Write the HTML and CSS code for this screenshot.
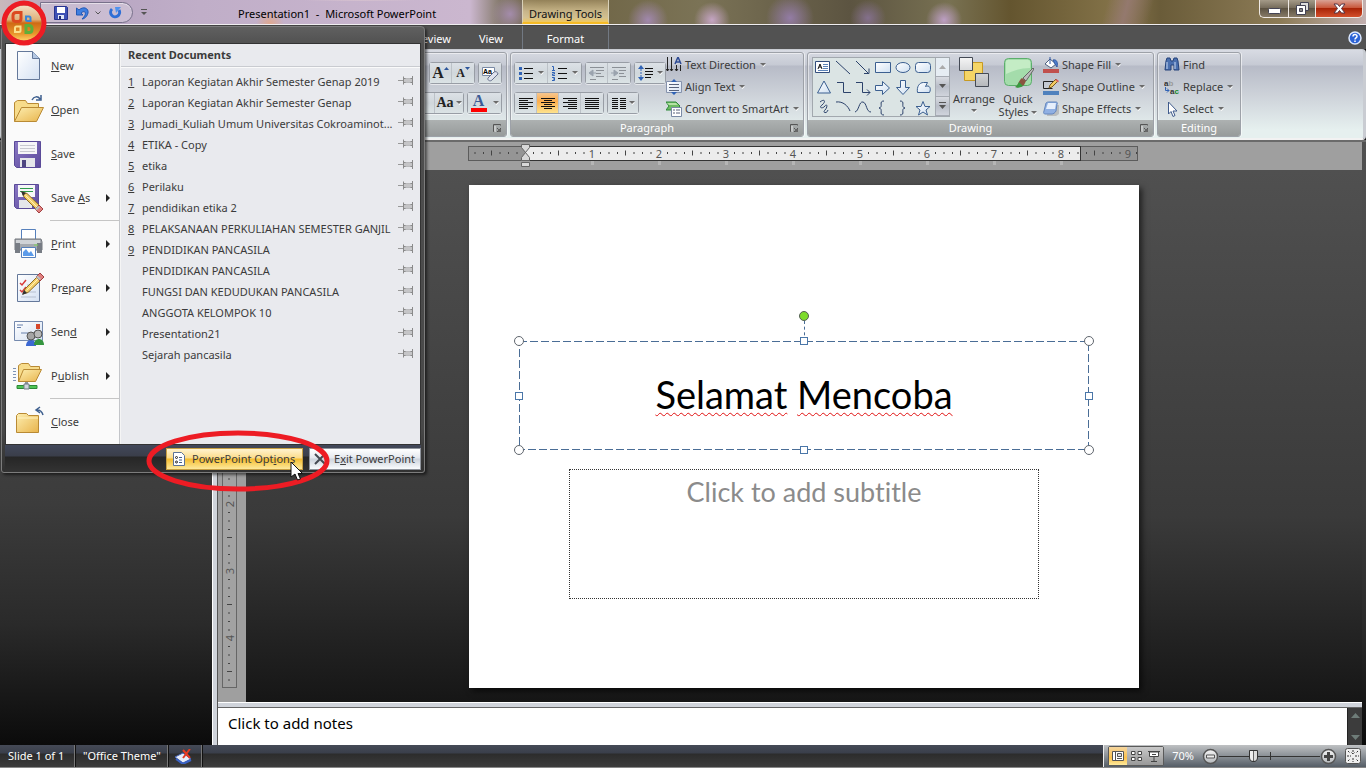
FILE: index.html
```html
<!DOCTYPE html>
<html lang="en">
<head>
<meta charset="utf-8">
<title>Presentation1 - Microsoft PowerPoint</title>
<link rel="stylesheet" href="styles.css">
</head>
<body>
<svg class="defs" aria-hidden="true">
  <defs>
    <linearGradient id="paper" x1="0" y1="0" x2="1" y2="1"><stop offset="0" stop-color="#fff"/><stop offset="1" stop-color="#d5e1f3"/></linearGradient>
    <linearGradient id="folder" x1="0" y1="0" x2="1" y2="1"><stop offset="0" stop-color="#fdeeb0"/><stop offset="1" stop-color="#e8b44c"/></linearGradient>
    <linearGradient id="disk" x1="0" y1="0" x2="1" y2="1"><stop offset="0" stop-color="#8a78c4"/><stop offset="1" stop-color="#5c4a9c"/></linearGradient>
    <linearGradient id="silver" x1="0" y1="0" x2="0" y2="1"><stop offset="0" stop-color="#f5f5f5"/><stop offset="1" stop-color="#b5b8bc"/></linearGradient>
    <linearGradient id="ice" x1="0" y1="0" x2="1" y2="1"><stop offset="0" stop-color="#fff"/><stop offset="1" stop-color="#cfe0f2"/></linearGradient>
    <linearGradient id="orb" x1="0" y1="0" x2="0" y2="1"><stop offset="0" stop-color="#f3e0c6"/><stop offset=".4" stop-color="#e0b27c"/><stop offset=".5" stop-color="#cf6a14"/><stop offset=".8" stop-color="#e8962c"/><stop offset="1" stop-color="#ffd468"/></linearGradient>
    <symbol id="arrow" viewBox="0 0 6 4"><path d="M1 1.500h5L3.500 4z" fill="#fff"/><path d="M0 0h6L3 3z" fill="#6b6b6b"/></symbol>
    <symbol id="launch" viewBox="0 0 8 8"><path d="M1.500 7.500h-1v-7h7v1" fill="none" stroke="#555"/><path d="M2 8V2" stroke="#eee" fill="none"/><path d="M4 4l3 3M7.500 4v3.500H4" fill="none" stroke="#555"/><path d="M5 5h3v3H5z" fill="#666"/></symbol>
    <symbol id="pin" viewBox="0 0 15 9"><path d="M0 4.500h5" stroke="#999" fill="none"/><path d="M5.500 .5v8M6 2.500h1l1 .5h4l1-.5h1.500v-2M6 6.500h1l1-.5h4l1 .5h1.500v2M14.500 0v9" fill="none" stroke="#8a8a8a"/><path d="M6 3h8v3H6z" fill="#c5c5c7"/></symbol>
    <symbol id="pencil" viewBox="0 0 22 22"><path d="M1 1l5 1.500L20 16l-3.500 3.500L3 6z" fill="#f3cf6b" stroke="#8b6a24"/><path d="M4.500 4.500L18 18" stroke="#fff2b8" fill="none"/><path d="M0 0l5 2-3 3z" fill="#333"/><path d="M18 14l4 4-4 4-4-4z" fill="#e08080" stroke="#a04040"/><path d="M17 15l-3 3 1.500 1.500L19 16z" fill="#b8c4c0"/></symbol>
  </defs>
</svg>

<div class="window">
  <header class="titlebar">
    <div class="titlebar-left">
      <div class="quick-access">
        <button class="plain" aria-label="Save"><svg width="14" height="14" viewBox="0 0 14 14"><path d="M.5.5h12l1 1v12H.5z" fill="#3f51b5" stroke="#27338f"/><path d="M3 1h8v6H3z" fill="#fff"/><path d="M4 9h6v4H4z" fill="#dfe6f8"/><path d="M5 10h2v3H5z" fill="#222c70"/></svg></button>
        <button class="plain" aria-label="Undo"><svg width="13" height="14" viewBox="0 0 13 14"><path d="M3 4c4-4 10-2 9 3-1 4-4 6-6 6 3-3 4-5 3-7-1-1-3 0-4 1l2 2H.5V2z" fill="#3f7fe0" stroke="#2358b5"/></svg></button>
        <svg width="6" height="4" class="mini"><path d="M.5.5l2.500 2.500L5.500.5" fill="none" stroke="#555"/></svg>
        <button class="plain redo" aria-label="Repeat"><svg width="13" height="14" viewBox="0 0 13 14"><path d="M3 3a4.500 4.500 0 1 0 7 1" fill="none" stroke="#2f6fd6" stroke-width="3"/><path d="M6 1h6L7 7z" fill="#4f93ee"/></svg></button>
      </div>
      <button class="plain customize" aria-label="Customize Quick Access Toolbar"><svg width="6" height="7"><path d="M0 .5h6" stroke="#555"/><path d="M0 3h6L3 6z" fill="#555"/></svg></button>
      <h1 class="caption">Presentation1 &nbsp;-&nbsp; Microsoft PowerPoint</h1>
    </div>
    <div class="context-title">Drawing Tools</div>
    <div class="window-controls">
      <button class="win-min" aria-label="Minimize"><svg width="13" height="6"><rect x=".5" y=".5" width="12" height="5" rx="1" fill="#fff" stroke="#445"/></svg></button>
      <button class="win-max" aria-label="Restore"><svg width="13" height="13"><path d="M4.500.5h8v8h-8z" fill="#ddd" stroke="#445"/><path d="M.5 3.500h9v9h-9z" fill="#fff" stroke="#445"/><path d="M3.500 6.500h3v3h-3z" fill="#888" stroke="#445"/></svg></button>
      <button class="win-close" aria-label="Close"><svg width="13" height="11" viewBox="0 0 13 11"><path d="M1 1h3.500l2 2.500 2-2.500H12L8.500 5.500 12 10H8.500l-2-2.500-2 2.500H1l3.500-4.500z" fill="#fff" stroke="#534"/></svg></button>
    </div>
  </header>

  <nav class="tabs">
    <div class="tabs-main"><button class="plain tab">Review</button><button class="plain tab">View</button></div>
    <button class="plain tab format-tab">Format</button>
    <button class="plain help" aria-label="Help"><svg width="14" height="14" viewBox="0 0 14 14"><circle cx="7" cy="7" r="6" fill="#2c63d6" stroke="#dbe8ff" stroke-width="1.500"/><path d="M5 5.500C5 3 9 3 9 5.300 9 7 7 6.800 7 8.500M7 9.500V11" fill="none" stroke="#fff" stroke-width="1.500"/></svg></button>
  </nav>

  <section class="ribbon">
    <div class="group font-group">
      <div class="group-body font-body">
        <div class="button-row">
          <div class="set"><button class="tool letter"><b class="big-a">A</b><svg width="5" height="3" class="up"><path d="M0 3h5L2.500 0z" fill="#2d569b"/></svg></button><button class="tool letter"><b class="small-a">A</b><svg width="5" height="3" class="up"><path d="M0 0h5L2.500 3z" fill="#2d569b"/></svg></button></div>
          <div class="set"><button class="tool" aria-label="Clear Formatting"><svg width="17" height="17"><path d="M.5 2.500h12v8H.5z" fill="#fff" stroke="#7a8aa5"/><text x="1" y="9" class="tiny">Aa</text><path d="M6 13l6-6c1-1 4 0 4 2l-6 6c-2 2-5 0-4-2z" fill="#dfe3ee" stroke="#66708c"/></svg></button></div>
        </div>
        <div class="button-row">
          <div class="set"><button class="tool dropdown letter" aria-label="Character spacing"><svg class="arr"><use href="#arrow"/></svg></button><button class="tool dropdown letter"><b class="aa">Aa</b><svg class="arr"><use href="#arrow"/></svg></button></div>
          <div class="set"><button class="tool font-color"><span>A</span><svg class="arr"><use href="#arrow"/></svg></button></div>
        </div>
      </div>
      <div class="group-label"><button class="plain launcher" aria-label="Font dialog"><svg width="8" height="8"><use href="#launch"/></svg></button></div>
    </div>

    <div class="group paragraph-group">
      <div class="group-body split">
        <div class="para-buttons">
          <div class="button-row">
            <div class="set">
              <button class="tool dropdown" aria-label="Bullets"><svg width="14" height="14"><path d="M5 2.500h9M5 7.500h9M5 12.500h9" stroke="#111"/><path d="M0 1h3v3H0zM0 6h3v3H0zM0 11h3v3H0z" fill="#2f62b5"/></svg><svg class="arr"><use href="#arrow"/></svg></button>
              <button class="tool dropdown" aria-label="Numbering"><svg width="15" height="15"><path d="M6 2.500h9M6 7.500h9M6 12.500h9" stroke="#111"/><path d="M0 .5h1.500V4M0 4.500h3M0 6.500h2.500v1.500H.5v1.500H3M0 11.500h2.500v3H0M1 13h1" stroke="#2f62b5" fill="none"/></svg><svg class="arr"><use href="#arrow"/></svg></button>
            </div>
            <div class="set disabled">
              <button class="tool" aria-label="Decrease indent"><svg width="16" height="14"><path d="M1 1.500h14M7 4.500h8M7 7.500h5M7 10.500h8M1 13.500h6" stroke="#8b9096"/><path d="M4 4L0 7l4 3zM4 7h3" fill="#9aa3ae" stroke="#9aa3ae"/></svg></button>
              <button class="tool" aria-label="Increase indent"><svg width="16" height="14"><path d="M1 1.500h14M8 4.500h7M8 7.500h5M8 10.500h7M1 13.500h6" stroke="#8b9096"/><path d="M3 4l4 3-4 3zM0 7h4" fill="#9aa3ae" stroke="#9aa3ae"/></svg></button>
            </div>
            <div class="set"><button class="tool dropdown spacing" aria-label="Line spacing"><svg width="16" height="16"><path d="M7 3.500h8M7 6.500h8M7 9.500h8M7 12.500h6" stroke="#111"/><path d="M3 0l3 4H0zM3 16l3-4H0z" fill="#2f62b5"/><path d="M3 4v8" stroke="#2f62b5" stroke-dasharray="2 1"/></svg><svg class="arr"><use href="#arrow"/></svg></button></div>
          </div>
          <div class="button-row">
            <div class="set">
              <button class="tool" aria-label="Align left"><svg width="14" height="11"><path d="M0 .5h14M0 2.500h9M0 4.500h14M0 6.500h9M0 8.500h14M0 10.500h9" stroke="#111"/></svg></button>
              <button class="tool pressed" aria-label="Center"><svg width="14" height="11"><path d="M0 .5h14M3 2.500h8M0 4.500h14M3 6.500h8M0 8.500h14M3 10.500h8" stroke="#111"/></svg></button>
              <button class="tool" aria-label="Align right"><svg width="14" height="11"><path d="M0 .5h14M5 2.500h9M0 4.500h14M5 6.500h9M0 8.500h14M5 10.500h9" stroke="#111"/></svg></button>
              <button class="tool" aria-label="Justify"><svg width="14" height="11"><path d="M0 .5h14M0 2.500h14M0 4.500h14M0 6.500h14M0 8.500h14M0 10.500h14" stroke="#111"/></svg></button>
            </div>
            <div class="set"><button class="tool dropdown columns" aria-label="Columns"><svg width="14" height="11"><path d="M0 .5h14M0 2.500h14M0 4.500h14M0 6.500h14M0 8.500h14M0 10.500h14" stroke="#111"/><path d="M6 0h2v11H6z" fill="#d5dce0"/></svg><svg class="arr"><use href="#arrow"/></svg></button></div>
          </div>
        </div>
        <div class="command-list">
          <button class="plain command"><svg width="16" height="16"><path d="M1.500 0v14M5.500 0v14M10.500 8v6M14.500 8v6M0 12l1.500 2L3 12M4 12l1.500 2L7 12M9 12l1.500 2 1.500-2" stroke="#222" fill="none"/><path d="M9 7l3-7 3 7M10 5h4" stroke="#2d4a94" stroke-width="1.500" fill="none"/></svg>Text Direction<svg class="arr"><use href="#arrow"/></svg></button>
          <button class="plain command"><svg width="16" height="16"><path d="M.5 2.500h15v11H.5z" fill="url(#paper)" stroke="#8592ac"/><path d="M3 5.500h10M3 8.500h10M3 11.500h10" stroke="#56617b"/><path d="M8 0l3 3H5zM8 16l3-3H5z" fill="#2f62b5"/></svg>Align Text<svg class="arr"><use href="#arrow"/></svg></button>
          <button class="plain command"><svg width="16" height="16"><path d="M0 1h10l4 4-4 4H0l3-4z" fill="#6dbb62" stroke="#2f8a3b"/><path d="M1 2h9l2 2H3z" fill="#b5e2a4"/><path d="M5.500 6.500h10v9h-10z" fill="#fff" stroke="#7a8aa5"/><path d="M7 9h2M7 12h2M10 9h4M10 12h4" stroke="#56617b"/></svg>Convert to SmartArt<svg class="arr"><use href="#arrow"/></svg></button>
        </div>
      </div>
      <div class="group-label">Paragraph<button class="plain launcher" aria-label="Paragraph dialog"><svg width="8" height="8"><use href="#launch"/></svg></button></div>
    </div>

    <div class="group drawing-group">
      <div class="group-body split">
        <div class="gallery">
          <svg width="122" height="58" viewBox="0 0 122 58" role="img" aria-label="Shapes">
            <g fill="none" stroke="#2c426b">
              <path d="M2.500 3.500h14v11h-14z" fill="#fff" stroke="#334d7c"/><path d="M5 11l2-5 2 5M6 9h2" stroke="#111"/><path d="M10 6.500h5M10 8.500h5M10 10.500h5M5 12.500h10" stroke="#5c83b8"/>
              <path d="M23 3l14 13M43 3l12 12M51 15.500h5v-5"/>
              <path d="M62.500 4.500h15v10h-15z" fill="url(#ice)" stroke="#3b5f90"/>
              <ellipse cx="90" cy="9.500" rx="7" ry="5" fill="url(#ice)" stroke="#3b5f90"/>
              <rect x="102.500" y="4.500" width="15" height="10" rx="3" fill="url(#ice)" stroke="#3b5f90"/>
              <path d="M11 23l6.500 12h-13z" fill="url(#ice)" stroke="#3b5f90"/>
              <path d="M24 24.500h6.500v10H38M43 24.500h6.500v10H57M54 31.500l3 3-3 3"/>
              <path d="M62.500 27.500h7v-4l7 6.500-7 6.500v-4h-7z" fill="url(#ice)" stroke="#3b5f90"/>
              <path d="M87.500 22.500h5v7h4L90 36.500l-6.500-7h4z" fill="url(#ice)" stroke="#3b5f90"/>
              <path d="M104.500 34.500c-1-6 2-10 6-10h4l-2 4c4-2 6 2 4 6z" fill="url(#ice)" stroke="#3b5f90"/>
              <path d="M7 44c5-4 6 0 2 3s1 4 3 1 3 1 0 4 2 4 3 0M23 44c7-1 12 4 14 9M42 54c4-1 4-11 8-10s3 10 8 10"/>
              <path d="M71 43c-6 0 0 6-5 7 5 1-1 7 5 7M87 43c6 0 0 6 5 7-5 1 1 7-5 7"/>
              <path d="M110 43.500l2 5h5l-4 3.500 1.500 5-4.500-3-4.500 3 1.500-5-4-3.500h5z" fill="url(#ice)" stroke="#3b5f90"/>
            </g>
          </svg>
          <div class="gallery-scroll">
            <button aria-label="Previous shapes"><svg width="7" height="4"><path d="M0 4h7L3.500 0z" fill="#aaa"/></svg></button>
            <button aria-label="Next shapes"><svg width="7" height="4"><path d="M0 0h7L3.500 4z" fill="#555"/></svg></button>
            <button aria-label="More shapes"><svg width="7" height="7"><path d="M0 .5h7" stroke="#555"/><path d="M0 3h7L3.500 7z" fill="#555"/></svg></button>
          </div>
        </div>
        <button class="plain big-command arrange"><svg width="32" height="32"><path d="M6.500 6.500h18v18h-18z" fill="#f5d566" stroke="#c79a22"/><path d="M1.500 1.500h13v13h-13zM17.500 17.500h13v13h-13z" fill="url(#silver)" stroke="#444a55"/></svg><span>Arrange</span><svg class="arr"><use href="#arrow"/></svg></button>
        <button class="plain big-command quick"><svg width="32" height="32"><rect x="2.500" y="2.500" width="27" height="27" rx="4" fill="#a4dcab" stroke="#5cae6c"/><path d="M4 6c0-2 1-2 2-2h20c2 0 2 1 2 2v6c-8 0-16 2-24 6z" fill="#c4ecc5"/><path d="M31 12L21 22l3 3 8-12z" fill="#bbb" stroke="#666"/><path d="M20 22l4 3-2 4c-3 3-7 2-9 2 4-2 3-6 7-9z" fill="#8a5340"/><path d="M17 26l4 4c-3 2-6 2-8 1 3-1 3-4 4-5z" fill="#359b3e"/></svg><span>Quick</span><span>Styles <svg class="arr"><use href="#arrow"/></svg></span></button>
        <div class="command-list">
          <button class="plain command"><svg width="16" height="16"><path d="M0 12h16v4H0z" fill="#c0504d"/><path d="M7 2l6 5-5 4-6-4z" fill="#fff" stroke="#4c5f80"/><path d="M7 7V0M10 3c4-1 5 3 4 7l-2-3z" stroke="#345ba3" fill="#4f7fd0"/></svg>Shape Fill<svg class="arr"><use href="#arrow"/></svg></button>
          <button class="plain command"><svg width="16" height="16"><path d="M0 12h16v4H0z" fill="#4f81bd"/><path d="M10 2.500H.5v7h9" fill="none" stroke="#222"/><path d="M6 9l1-3 6-6 2 2-6 6z" fill="#f1cb63" stroke="#7c5a1c"/><path d="M12 1l1.500-1L16 2l-1 1.500z" fill="#d86060"/></svg>Shape Outline<svg class="arr"><use href="#arrow"/></svg></button>
          <button class="plain command"><svg width="16" height="16"><path d="M5 4h11v9l-3 2H4z" fill="#999" opacity=".5"/><path d="M3 2c1-1 2-1 3-1h7c1 0 2 1 1 2l-1 7c-1 2-3 3-4 3H2c-1 0-2-1-1-3z" fill="#8fb0e3" stroke="#6587bd"/><path d="M5 2h8l-1 6H3z" fill="#e6effc"/></svg>Shape Effects<svg class="arr"><use href="#arrow"/></svg></button>
        </div>
      </div>
      <div class="group-label">Drawing<button class="plain launcher" aria-label="Drawing dialog"><svg width="8" height="8"><use href="#launch"/></svg></button></div>
    </div>

    <div class="group editing-group">
      <div class="group-body split">
        <div class="command-list">
          <button class="plain command"><svg width="16" height="16"><path d="M2 4l1-3h3l1 3h2l1-3h3l1 3 1 9h-5V8H7v5H1z" fill="#4a6fae" stroke="#24427a"/><path d="M3 5v7M11 5v7" stroke="#c9dbf5"/></svg>Find</button>
          <button class="plain command"><svg width="16" height="18"><text x="0" y="8" class="glyph">a<tspan class="pale">b</tspan></text><text x="6" y="16" class="glyph">a<tspan class="green">c</tspan></text><path d="M1.500 9v3.500H5M3 10.500l2 2-2 2" fill="none" stroke="#2f62b5"/></svg>Replace<svg class="arr"><use href="#arrow"/></svg></button>
          <button class="plain command"><svg width="16" height="16"><path d="M4.500 1v12l2.500-2.500 2 5 2-1-2-4.500H13z" fill="#fff" stroke="#3f5b8c"/></svg>Select<svg class="arr"><use href="#arrow"/></svg></button>
        </div>
      </div>
      <div class="group-label plain-label">Editing</div>
    </div>
  </section>

  <main class="workspace">
    <aside class="slides-pane"></aside>
    <div class="v-split"></div>
    <section class="editor">
      <div class="ruler-strip">
        <svg class="h-ruler" width="670" height="28" viewBox="0 0 670 28">
          <defs>
            <pattern id="ticks" x="57" y="0" width="67" height="15" patternUnits="userSpaceOnUse">
              <path d="M8.500 6v2M17 6v2M25.500 6v2M42 6v2M50.500 6v2M59 6v2M33.500 4.500v5" stroke="#444" fill="none"/>
            </pattern>
          </defs>
          <rect x=".5" y="4.500" width="669" height="14" fill="#959595" stroke="#5c5c5c"/>
          <rect x="57.500" y="4.500" width="555" height="14" fill="#ececec" stroke="#333"/>
          <g transform="translate(0 4)"><rect x="2" width="667" height="14" fill="url(#ticks)"/></g>
          <g class="ruler-text"><text x="124" y="16">1</text><text x="191" y="16">2</text><text x="258" y="16">3</text><text x="325" y="16">4</text><text x="392" y="16">5</text><text x="459" y="16">6</text><text x="526" y="16">7</text><text x="593" y="16">8</text><text x="660" y="16">9</text></g>
          <path d="M123 19h3v4h-3zM190 19h3v4h-3zM257 19h3v4h-3zM324 19h3v4h-3zM391 19h3v4h-3zM458 19h3v4h-3zM525 19h3v4h-3zM592 19h3v4h-3z" fill="#b5b5b5"/>
          <path d="M53.500 2.500h8v3l-4 5-4-5zM53.500 18.500v-3l4-5 4 5v3zM53.500 20.500h8v4h-8z" fill="#d8d8d8" stroke="#666"/>
        </svg>
      </div>
      <div class="stage">
        <div class="v-ruler-strip">
          <svg class="v-ruler" width="15" height="503" viewBox="0 0 15 503">
            <defs>
              <pattern id="vticks" x="0" y="185" width="15" height="67" patternUnits="userSpaceOnUse">
                <path d="M6 8.500h2M6 17h2M6 25.500h2M6 42h2M6 50.500h2M6 59h2M5 33.500h5" stroke="#444" fill="none"/>
              </pattern>
            </defs>
            <rect x=".5" y=".5" width="14" height="502" fill="#a2a2a2" stroke="#666"/>
            <rect y="2" width="15" height="499" fill="url(#vticks)"/>
            <g class="ruler-text"><text transform="translate(12 319) rotate(-90)">2</text><text transform="translate(12 386) rotate(-90)">3</text><text transform="translate(12 453) rotate(-90)">4</text></g>
          </svg>
        </div>
        <div class="canvas">
          <article class="slide">
            <div class="title-box">
              <svg class="frame" width="100%" height="100%"><rect width="100%" height="100%" fill="none" stroke="#4a6d96" stroke-width="2" stroke-dasharray="8 3"/></svg>
              <span class="spell">Selamat</span>&nbsp;<span class="spell">Mencoba</span>
              <i class="stem"></i><i class="rotate"></i>
              <i class="handle round nw"></i><i class="handle round ne"></i><i class="handle round sw"></i><i class="handle round se"></i>
              <i class="handle n"></i><i class="handle s"></i><i class="handle w"></i><i class="handle e"></i>
            </div>
            <div class="subtitle-box">Click to add subtitle</div>
          </article>
        </div>
      </div>
      <div class="h-split"></div>
      <div class="notes">
        <textarea aria-label="Notes">Click to add notes</textarea>
        <div class="notes-scroll"><svg width="9" height="5"><path d="M0 5h9L4.500 0z" fill="#6e7c78"/></svg><svg width="9" height="5"><path d="M0 0h9L4.500 5z" fill="#6e7c78"/></svg></div>
      </div>
    </section>
  </main>

  <footer class="statusbar">
    <span class="status-item first">Slide 1 of 1</span>
    <span class="status-item theme">"Office Theme"</span>
    <span class="status-item proof"><svg width="17" height="15"><path d="M0 8l8-4 8 6-8 4z" fill="#e8edf8" stroke="#4464b8"/><path d="M1 10l7 5 8-4" fill="none" stroke="#3a62c4" stroke-width="2"/><path d="M8 1l7 8M15 0L8 9" stroke="#e63a22" stroke-width="2"/></svg></span>
    <div class="view-tools">
      <div class="views">
        <button class="active" aria-label="Normal"><svg width="12" height="10"><path d="M.5.5h11v9H.5zM3.500 0v10" fill="#fff" stroke="#555"/><path d="M5.500 2.500h4v3h-4z" fill="#ddd" stroke="#555"/><path d="M5 7.500h5" stroke="#555"/></svg></button>
        <button aria-label="Slide Sorter"><svg width="11" height="10"><path d="M.5.500h3.500v3H.5zM7 .5h3.500v3H7zM.5 6.500h3.500v3H.5zM7 6.500h3.500v3H7z" fill="#fff" stroke="#444"/></svg></button>
        <button aria-label="Slide Show"><svg width="12" height="11"><path d="M0 .5h12" stroke="#444"/><path d="M1.500 1h9v4.500h-9z" fill="#fff" stroke="#444"/><path d="M6 6v4M3 10.500h6M4 3.500h4" stroke="#444"/></svg></button>
      </div>
      <button class="plain zoom-value">70%</button>
      <button class="plain" aria-label="Zoom out"><svg width="17" height="17"><circle cx="8.500" cy="8.500" r="7" fill="url(#silver)" stroke="#555" stroke-width="1.500"/><path d="M4.500 7h8v3h-8z" fill="#eee" stroke="#555"/></svg></button>
      <input class="zoom" type="range" min="10" max="190" value="68" aria-label="Zoom">
      <button class="plain" aria-label="Zoom in"><svg width="17" height="17"><circle cx="8.500" cy="8.500" r="7" fill="url(#silver)" stroke="#555" stroke-width="1.500"/><path d="M8.500 4v9M4 8.500h9" stroke="#444" stroke-width="3"/></svg></button>
      <button class="plain fit" aria-label="Fit slide to window"><svg width="16" height="16"><rect x=".5" y=".5" width="15" height="15" rx="2" fill="#eee" stroke="#555"/><path d="M8 2v4M8 10v4M2 8h4M10 8h4M3 3l2 2M13 3l-2 2M3 13l2-2M13 13l-2-2M6.500 4.500L8 6l1.500-1.500" fill="none" stroke="#333" stroke-dasharray="2 1"/></svg></button>
    </div>
  </footer>

  <section class="office-menu">
    <div class="menu-body">
      <nav class="menu-left">
        <button class="plain menu-item"><svg width="32" height="32"><path d="M5.500 1.500h15l7 7v21h-22z" fill="url(#paper)" stroke="#64789a"/><path d="M20.500 1.500v7h7" fill="#b4c7e2" stroke="#64789a"/></svg><span><u>N</u>ew</span></button>
        <button class="plain menu-item"><svg width="32" height="32"><path d="M2.500 27.500v-19l3-2h8l2 3h11v6" fill="#f7dc8b" stroke="#b98a34"/><path d="M2.500 27.500l7-14h22l-7 14z" fill="url(#folder)" stroke="#b98a34"/><path d="M20 6c2-4 6-4 8-1M29 1v5h-5" fill="none" stroke="#3e5f8e" stroke-width="1.500"/></svg><span><u>O</u>pen</span></button>
        <button class="plain menu-item"><svg width="32" height="32"><path d="M2.500 3.500h26v26h-24l-2-2z" fill="url(#disk)" stroke="#5a4a98"/><path d="M6 4h19v12H6z" fill="#f6f6f8"/><path d="M8 7.500h15M8 10.500h15M8 13.500h15" stroke="#c8c8d0"/><path d="M8 20h15v9H8z" fill="#e5e6ea"/><path d="M10 22h4v7h-4z" fill="#4d4580"/></svg><span><u>S</u>ave</span></button>
        <button class="plain menu-item"><svg width="32" height="32"><path d="M2.500 2.500h24v24h-22l-2-2z" fill="url(#disk)" stroke="#5a4a98"/><path d="M6 3h17v12H6z" fill="#f6f6f8"/><path d="M8 6.500h13M8 9.500h13" stroke="#2f9a4d"/><path d="M7 18h13v8H7z" fill="#e5e6ea"/><use href="#pencil" x="9" y="9" width="22" height="22"/></svg><span>Save <u>A</u>s</span><i class="more"></i></button>
        <hr>
        <button class="plain menu-item"><svg width="32" height="32"><path d="M9.500 11V1.500h14V11" fill="#fff" stroke="#5680bc"/><path d="M3 11h26l1 3v8H3z" fill="#a5a9af" stroke="#72767d"/><path d="M4 12h24v4H4z" fill="#cfd2d6"/><path d="M3 15h5v10H3zM25 15h5v10h-5z" fill="#777c84"/><path d="M9.500 19.500h14v10h-14z" fill="#fff" stroke="#5680bc"/><path d="M11 28v-4l3-3 3 4 2-2 3 5z" fill="#5b9bea"/><path d="M22 17h4" stroke="#7ed957"/></svg><span><u>P</u>rint</span><i class="more"></i></button>
        <button class="plain menu-item"><svg width="32" height="32"><path d="M5.500 2.500h22v27h-22z" fill="url(#paper)" stroke="#64789a"/><path d="M8 11l2 2 4-5M8 18l2 2 4-5" fill="none" stroke="#d83a3a" stroke-width="1.500"/><path d="M15 13h9M17 20h7M9 25h15" stroke="#b5bfd0"/><g transform="translate(10 23) scale(1 -1)"><use href="#pencil" width="22" height="22"/></g></svg><span>Pr<u>e</u>pare</span><i class="more"></i></button>
        <button class="plain menu-item"><svg width="32" height="32"><path d="M2.500 5.500h28v19h-28z" fill="url(#paper)" stroke="#7489ad"/><path d="M5 9h6M5 11.500h4M9 17h7" stroke="#6881ad"/><path d="M24 8h4v5h-4z" fill="#d6472b"/><path d="M14 30c0-8 10-8 10 0z" fill="#3c68d2"/><path d="M22 29c0-8 10-8 10 0z" fill="#35963f"/><circle cx="19" cy="20" r="4" fill="#a4a4a4" stroke="#555"/><circle cx="26" cy="18" r="4" fill="#b8b8b8" stroke="#555"/></svg><span>Sen<u>d</u></span><i class="more"></i></button>
        <button class="plain menu-item"><svg width="32" height="32"><path d="M1 8.500h3M1 11.500h3M1 14.500h3M1 17.500h3M1 20.500h3" stroke="#7e93b5"/><path d="M6.500 21.500v-16l3-2h7l2 3h9v6" fill="#f7dc8b" stroke="#b98a34"/><path d="M6.500 21.500l5-12h18l-6 12z" fill="url(#folder)" stroke="#b98a34"/><path d="M13 22h3v4h-3z" fill="#8a949f"/><path d="M5 25.500h20v3H5z" fill="#4fc455" stroke="#2c8838"/><path d="M12 24h5v5h-5z" fill="#cfd6dd" stroke="#707a85"/></svg><span>P<u>u</u>blish</span><i class="more"></i></button>
        <hr>
        <button class="plain menu-item"><svg width="32" height="32"><path d="M4.500 26.500v-17l2-2h8l2 2h10v17z" fill="url(#folder)" stroke="#b98a34"/><path d="M5 12h21" stroke="#fff3c2"/><path d="M31 9c-1-4-3-5-6-5M28 1l-4 3 4 3" fill="none" stroke="#3e5f8e" stroke-width="1.500"/></svg><span><u>C</u>lose</span></button>
      </nav>
      <div class="menu-right">
        <h2>Recent Documents</h2>
        <ul>
          <li><u>1</u><a href="#">Laporan Kegiatan Akhir Semester Genap 2019</a><svg class="pin"><use href="#pin"/></svg></li>
          <li><u>2</u><a href="#">Laporan Kegiatan Akhir Semester Genap</a><svg class="pin"><use href="#pin"/></svg></li>
          <li><u>3</u><a href="#">Jumadi_Kuliah Umum Universitas Cokroaminot...</a><svg class="pin"><use href="#pin"/></svg></li>
          <li><u>4</u><a href="#">ETIKA - Copy</a><svg class="pin"><use href="#pin"/></svg></li>
          <li><u>5</u><a href="#">etika</a><svg class="pin"><use href="#pin"/></svg></li>
          <li><u>6</u><a href="#">Perilaku</a><svg class="pin"><use href="#pin"/></svg></li>
          <li><u>7</u><a href="#">pendidikan etika 2</a><svg class="pin"><use href="#pin"/></svg></li>
          <li><u>8</u><a href="#">PELAKSANAAN PERKULIAHAN SEMESTER GANJIL</a><svg class="pin"><use href="#pin"/></svg></li>
          <li><u>9</u><a href="#">PENDIDIKAN PANCASILA</a><svg class="pin"><use href="#pin"/></svg></li>
          <li><u></u><a href="#">PENDIDIKAN PANCASILA</a><svg class="pin"><use href="#pin"/></svg></li>
          <li><u></u><a href="#">FUNGSI DAN KEDUDUKAN PANCASILA</a><svg class="pin"><use href="#pin"/></svg></li>
          <li><u></u><a href="#">ANGGOTA KELOMPOK 10</a><svg class="pin"><use href="#pin"/></svg></li>
          <li><u></u><a href="#">Presentation21</a><svg class="pin"><use href="#pin"/></svg></li>
          <li><u></u><a href="#">Sejarah pancasila</a><svg class="pin"><use href="#pin"/></svg></li>
        </ul>
      </div>
    </div>
    <div class="menu-footer">
      <button class="foot-btn options"><svg width="12" height="14"><path d="M.5.5h8l3 3v10H.5z" fill="#fff" stroke="#5d7396"/><circle cx="3.500" cy="5.500" r="1" fill="none" stroke="#222"/><circle cx="3.500" cy="10" r="1" fill="none" stroke="#222"/><path d="M6 5.500h3M6 8h3M6 10.500h3" stroke="#445d88"/></svg><span>PowerPoint Opt<u>i</u>ons</span></button>
      <button class="foot-btn exit"><svg width="12" height="12"><path d="M1 1l10 10M11 1L1 11" stroke="#454a52" stroke-width="2"/></svg><span>E<u>x</u>it PowerPoint</span></button>
    </div>
  </section>

  <button class="plain office-button" aria-label="Office Button"><svg width="48" height="48" viewBox="0 0 48 48">
    <circle cx="24" cy="23" r="18" fill="url(#orb)" stroke="#b98b5c"/>
    <g fill="none" stroke-width="3"><path d="M21 12.500h-5q-3 0-3 3v3q0 3 3 3h2q3 0 3-3z" stroke="#dc4a20"/><path d="M26 16.500h3q1.500 0 1.500 1.500v3h-3q-1.500 0-1.500-1.500z" stroke="#3a86d6" stroke-width="2"/><path d="M20.500 26.500h-4q-1.500 0-1.500 1.500v4h4q1.500 0 1.500-1.500z" stroke="#fbe08a" stroke-width="2"/><path d="M26 25.500h3q3 0 3 3v1q0 3-3 3h-3z" stroke="#5fae3a"/></g>
  </svg></button>
  <svg class="mark ring" width="48" height="46"><circle cx="24" cy="23" r="20" fill="none" stroke="#ed1c24" stroke-width="5"/></svg>
  <svg class="mark oval" width="184" height="62"><ellipse cx="92" cy="31" rx="89" ry="28" fill="none" stroke="#ed1c24" stroke-width="5"/></svg>
  <svg class="mark cursor" width="14" height="20"><path d="M1 1v15l4-3 2.500 6 3-1L8 12.500h4.500z" fill="#fff" stroke="#111"/></svg>
</div>
</body>
</html>
```

FILE: styles.css
```css
* { box-sizing: border-box; }

body {
  margin: 0;
  font-family: "Noto Sans", "Open Sans", sans-serif;
  font-size: 11px;
  line-height: 16px;
  color: #3b3b3b;
  background: #111;
}

button { font: inherit; color: inherit; }
svg { display: block; flex: none; }
.defs { position: absolute; width: 0; height: 0; }
.plain { border: 0; background: none; padding: 0; }
.arr { width: 6px; height: 4px; }

.window {
  position: relative;
  display: flex;
  flex-direction: column;
  min-height: 100vh;
  overflow: hidden;
}

/* Title bar */
.titlebar {
  display: flex;
  height: 25px;
  border-bottom: 1px solid #f0eef0;
  background:
    radial-gradient(circle at 270px 24px, #dfa88f 0, #dfa88f00 14px),
    radial-gradient(ellipse at 360px 0, #d9c4d0 0, #d9c4d000 60px),
    radial-gradient(circle at 510px 14px, #a48cab 0, #a48cab00 18px),
    radial-gradient(circle at 648px 20px, #a188ad 0, #a188ad00 20px),
    radial-gradient(circle at 712px 20px, #c5a5c4 0, #c5a5c400 18px),
    radial-gradient(circle at 790px 18px, #937ca5 0, #937ca500 24px),
    radial-gradient(circle at 868px 18px, #84708c 0, #84708c00 18px),
    radial-gradient(circle at 944px 20px, #bd9fc4 0, #bd9fc400 18px),
    linear-gradient(105deg, transparent 1070px, #94796e 1090px, transparent 1115px),
    linear-gradient(90deg, #c9b9bb 0, #b5a3c0 60px, #c0aec8 200px, #cbb7cf 470px, #857a6c 500px, #6b6040 540px, #7b7356 700px, #5c5441 850px, #787152 950px, #64552f 1010px, #85744a 1120px, #6a5c39 1160px, #8c7b56 1280px, #c2b0b0 100%);
}
.titlebar-left { flex: 0 0 522px; display: flex; align-items: flex-start; padding-left: 40px; }
.quick-access {
  display: flex;
  align-items: center;
  gap: 8px;
  width: 93px;
  height: 21px;
  margin-top: 2px;
  padding-left: 13px;
  border: 1px solid #77708a;
  border-radius: 0 11px 11px 0;
  background: #ffffff40;
  box-shadow: inset 0 1px #ffffff80;
}
.mini { margin-left: -2px; }
.customize { margin: 9px 0 0 8px; }
.caption {
  margin: 5px 0 0 91px;
  font-size: 11px;
  line-height: 18px;
  font-weight: 400;
  color: #000;
  white-space: nowrap;
}
.context-title {
  flex: 0 0 87px;
  padding-top: 5px;
  line-height: 18px;
  text-align: center;
  color: #111;
  white-space: nowrap;
  border: solid #d8d0b8;
  border-width: 0 1px;
  border-bottom: 2px solid #f5bb26;
  background: linear-gradient(#a08c60c0, #d8c494d0 50%, #e8d4a0d0 80%, #f0c860);
}
.window-controls { display: flex; margin: 0 3px 0 auto; height: 18px; }
.window-controls button {
  display: flex;
  align-items: center;
  justify-content: center;
  width: 27px;
  padding: 0;
  border: 1px solid #efe9e4;
  border-top: 0;
  border-right: 0;
  background: linear-gradient(#a49a88, #776d5c 45%, #5d5343 50%, #867a66);
}
.window-controls .win-min { width: 29px; border-radius: 0 0 0 5px; padding-top: 4px; }
.window-controls .win-close { width: 48px; border-right: 1px solid #efe9e4; border-radius: 0 0 5px 0; background: linear-gradient(#d9a294, #c9583c 45%, #a92407 50%, #d3502c); }

/* Tabs */
.tabs { display: flex; height: 24px; background: #525252; border-top: 1px solid #444; color: #fff; }
.tabs-main { flex: 0 0 522px; display: flex; justify-content: flex-end; gap: 28px; padding-right: 19px; }
.tab { padding-top: 3px; }
.format-tab { width: 87px; border: solid #727983; border-width: 0 1px; }
.help { margin: 0 4px 0 auto; }

/* Ribbon */
.ribbon {
  display: flex;
  gap: 3px;
  height: 91px;
  padding: 2px 4px;
  border: 1px solid #c9ccd2;
  border-bottom: 2px solid #f2f2f2;
  border-right: 3px solid #c9ccd2;
  border-radius: 0 4px 4px 4px;
  background: linear-gradient(#d8dbe3, #c6cad4 15px, #b7bbc7 16px, #cdd2d9 45px, #e6f0ef 80px);
}
.group {
  display: flex;
  flex-direction: column;
  flex: none;
  height: 85px;
  border: 1px solid #9da1a8;
  border-radius: 3px;
  box-shadow: inset 1px 1px #ffffff80, 1px 0 #ffffff90;
}
.font-group { width: 502px; }
.paragraph-group { width: 294px; }
.drawing-group { width: 347px; }
.editing-group { width: 84px; }
.group-body { flex: 1; }
.group-label {
  position: relative;
  height: 16px;
  padding-right: 20px;
  line-height: 15px;
  text-align: center;
  color: #fff;
  border-radius: 0 0 2px 2px;
  background: linear-gradient(#adb1b1, #979b9b);
}
.plain-label { padding-right: 0; }
.launcher { position: absolute; right: 5px; top: 4px; }
.split { display: flex; align-items: flex-start; }
.font-body { padding: 9px 4px 0; display: flex; flex-direction: column; align-items: flex-end; gap: 8px; }
.para-buttons { display: flex; flex-direction: column; gap: 8px; width: 155px; padding: 9px 0 0 3px; }
.button-row { display: flex; gap: 3px; }
.set { display: flex; border: 1px solid #989da5; border-radius: 3px; box-shadow: 0 1px #ffffff90; }
.tool {
  display: flex;
  align-items: center;
  justify-content: center;
  gap: 4px;
  width: 22px;
  height: 20px;
  padding: 0 2px;
  border: 0;
  border-right: 1px solid #bcc2c8;
  background: linear-gradient(#dce1e6, #d0d7dc 50%, #dbe3e5);
}
.tool:last-child { border-right: 0; }
.dropdown { width: 33px; padding: 0 3px; gap: 5px; }
.spacing, .columns { width: 30px; gap: 3px; }
.pressed { background: linear-gradient(#f6c690, #fcae4e 40%, #fde38d); }
.letter { gap: 0; color: #222; font-family: "Liberation Serif", serif; }
.dropdown.letter { width: 28px; gap: 2px; }
.big-a { font-size: 16px; }
.small-a { font-size: 12px; }
.aa { font-size: 14px; }
.up { align-self: flex-start; margin-top: 4px; }
.font-color { width: 33px; gap: 6px; font-family: "Liberation Serif", serif; font-size: 16px; font-weight: 700; color: #3c5b96; }
.font-color span { width: 16px; line-height: 14px; border-bottom: 4px solid #f00; }
.tiny { font: 700 7px "Liberation Sans", sans-serif; }
.glyph { font: 700 8px "Liberation Sans", sans-serif; fill: #333; }
.pale { fill: #999; }
.green { fill: #178a28; }

.command-list { display: flex; flex-direction: column; align-items: flex-start; padding-top: 1px; }
.command { display: flex; align-items: center; gap: 3px; height: 22px; white-space: nowrap; }
.command .arr { margin-left: 1px; }
.editing-group .command-list { padding-left: 6px; }

.gallery { display: flex; flex: none; margin: 4px 2px 0 4px; border: 1px solid #a2a8ae; background: #dbe4e4; }
.gallery-scroll { display: flex; flex-direction: column; width: 14px; }
.gallery-scroll button {
  flex: 1;
  display: flex;
  align-items: center;
  justify-content: center;
  padding: 0;
  border: solid #a6abb3;
  border-width: 0 0 1px 1px;
  background: linear-gradient(#d9dce2, #b9bec8 50%, #d0d4dc);
}
.gallery-scroll button:first-child { background: #e6edf3; }
.big-command { display: flex; flex-direction: column; align-items: center; width: 44px; padding-top: 3px; line-height: 13px; white-space: nowrap; }
.big-command > svg:first-child { margin-bottom: 4px; }
.big-command span + .arr { margin-top: 4px; }
.big-command span .arr { display: inline-block; vertical-align: middle; }
.quick { margin-right: 3px; }

/* Workspace */
.workspace {
  flex: 1;
  display: flex;
  padding-right: 4px;
  border-top: 2px solid #6b6b6b;
  background: linear-gradient(#505050, #3c3c3c 60%, #2a2a2a 80%, #0b0b0b);
}
.slides-pane { flex: 0 0 212px; }
.v-split { flex: 0 0 6px; border-left: 1px solid #fff; border-right: 1px solid #555; background: #d0d4db; }
.editor { flex: 1; min-width: 0; display: flex; flex-direction: column; }
.ruler-strip { display: flex; justify-content: center; height: 28px; padding-left: 26px; background: #9f9f9f; }
.stage { flex: 1; display: flex; background: linear-gradient(#505050, #3a3a3a 65%, #161616); }
.v-ruler-strip { flex: 0 0 28px; padding: 15px 0 0 4px; background: #9f9f9f; }
.canvas { flex: 1; display: flex; justify-content: center; align-items: flex-start; padding: 15px 0 14px; }
.ruler-text { font-size: 11px; fill: #555; text-anchor: middle; }
.slide {
  display: flex;
  flex-direction: column;
  align-items: center;
  gap: 19px;
  width: 670px;
  height: 503px;
  padding-top: 156px;
  background: #fff;
  box-shadow: 3px 3px 6px #0009;
  font-family: Lato, sans-serif;
  font-variant-ligatures: none;
}
.title-box {
  position: relative;
  display: flex;
  align-items: center;
  justify-content: center;
  width: 570px;
  height: 109px;
  padding-bottom: 4px;
  font-size: 38px;
  line-height: 46px;
  color: #000;
}
.frame { position: absolute; inset: 0; }
.spell { text-decoration: underline wavy #e01010 1px; text-underline-offset: 3px; }
.handle { position: absolute; width: 8px; height: 8px; margin: -4px; background: #fff; border: 1px solid #4a76a8; }
.round { width: 10px; height: 10px; margin: -5px; border-color: #60666e; border-radius: 50%; }
.nw { left: 0; top: 0; }
.ne { left: 100%; top: 0; }
.sw { left: 0; top: 100%; }
.se { left: 100%; top: 100%; }
.n { left: 50%; top: 0; }
.s { left: 50%; top: 100%; }
.w { left: 0; top: 50%; }
.e { left: 100%; top: 50%; }
.stem { position: absolute; left: 50%; top: -20px; height: 20px; border-left: 1px dashed #4a6d96; }
.rotate { position: absolute; left: 50%; top: -25px; width: 10px; height: 10px; margin: -5px; border: 1px solid #555e55; border-radius: 50%; background: #7ddb2c; }
.subtitle-box { width: 470px; height: 130px; padding-top: 5px; border: 1px dotted #333; text-align: center; font-size: 27px; line-height: 34px; color: #8b8b8b; }
.h-split { height: 6px; border-top: 1px solid #fff; border-bottom: 1px solid #666; background: #d0d4db; }
.notes { display: flex; height: 37px; background: #fff; }
.notes textarea {
  flex: 1;
  padding: 3px 10px;
  border: 0;
  resize: none;
  overflow: hidden;
  font-family: "Noto Sans", sans-serif;
  font-size: 15px;
  line-height: 24px;
  color: #000;
}
.notes-scroll { display: flex; flex-direction: column; justify-content: space-between; align-items: center; width: 15px; padding: 5px 0; background: #3c3c3c; border-left: 1px solid #222; }

/* Status bar */
.statusbar {
  display: flex;
  height: 23px;
  border-bottom: 1px solid #888;
  background: linear-gradient(#454a57, #3a3f4b 8px, #2c2c2c 9px, #3c3c3c);
  color: #fff;
}
.status-item { display: flex; align-items: center; padding: 0 8px; border-right: 1px solid #777; box-shadow: 1px 0 #111; white-space: nowrap; }
.first { width: 75px; }
.theme { width: 93px; }
.proof { width: 34px; padding-left: 7px; }
.view-tools {
  display: flex;
  align-items: center;
  width: 263px;
  margin-left: auto;
  padding: 0 5px 0 4px;
  border-left: 1px solid #eee;
  background: linear-gradient(#bfc1c3, #8a9096 50%, #555d66);
}
.views { display: flex; border: 1px solid #5a5a5a; border-radius: 2px; }
.views button { display: flex; align-items: center; justify-content: center; width: 18px; height: 18px; padding: 0; border: 0; background: linear-gradient(#c8c8c8, #999); }
.views .active { background: linear-gradient(#f5d6a0, #fbc04a 60%, #fdea9c); }
.zoom-value { width: 38px; }
.zoom { appearance: none; width: 101px; height: 16px; margin: 0; background: linear-gradient(#333, #333) 51% 50% / 1px 8px no-repeat, linear-gradient(#333, #333) 0 50% / 100% 1px no-repeat; }
.zoom::-webkit-slider-thumb { appearance: none; width: 9px; height: 12px; border: 1px solid #333; border-radius: 1px 1px 5px 5px; background: linear-gradient(90deg, #eee 3px, #666 3px, #666 4px, #ddd 4px); }
.fit { margin-left: auto; }

/* Office menu */
.office-menu {
  position: absolute;
  left: 1px;
  top: 26px;
  width: 424px;
  padding: 16px 3px 0;
  border: 1px solid #7c7c7c;
  border-radius: 4px 4px 3px 3px;
  background: linear-gradient(#606060, #505050 18px, #484848 90%, #303030);
  box-shadow: 2px 2px 3px #0008;
}
.menu-body { display: flex; height: 402px; border: 1px solid #333; }
.menu-left { width: 114px; background: #fafafa; border-right: 1px solid #c3c5c9; }
.menu-left hr { height: 2px; margin: 0 0 0 44px; border: 0; border-top: 1px solid #c5c5c5; }
.menu-item { display: flex; align-items: center; gap: 7px; width: 100%; height: 44px; padding-left: 6px; }
.more { margin: 0 9px 0 auto; border: 4px solid transparent; border-left-color: #222; border-right: 0; }
.menu-right { flex: 1; border-left: 1px solid #f5f5f5; background: #e9eaee; }
.menu-right h2 { margin: 0; padding-left: 7px; font-size: 11px; line-height: 22px; border-bottom: 1px solid #c9cbd0; box-shadow: 0 1px #fafafa; }
.menu-right ul { margin: 4px 0 0; padding: 0; list-style: none; }
.menu-right li { display: flex; height: 21px; line-height: 21px; padding: 0 7px; }
.menu-right li u { width: 14px; }
.menu-right a { flex: 1; color: inherit; text-decoration: none; white-space: nowrap; }
.pin { width: 15px; height: 9px; margin-top: 5px; }
.menu-footer {
  display: flex;
  justify-content: flex-end;
  gap: 6px;
  height: 27px;
  padding: 3px 0 2px;
  background: linear-gradient(#42485a, #3a3e4a 11px, #262626 12px, #333);
}
.foot-btn { display: flex; align-items: center; height: 22px; padding: 0 6px; border: 1px solid #8f949c; white-space: nowrap; }
.options { width: 137px; gap: 7px; border-color: #c79f42; background: linear-gradient(#fff3cf, #fbdc8a 45%, #f5bd2f 50%, #fde99c); }
.exit { width: 112px; gap: 8px; padding: 0 4px; background: linear-gradient(#fff, #e4e8ee 45%, #cdd3dc 50%, #fafcfe); }

/* Overlaid marks */
.office-button { position: absolute; left: 0; top: 0; }
.mark { position: absolute; pointer-events: none; }
.ring { left: 0; top: 0; }
.oval { left: 146px; top: 430px; }
.cursor { left: 290px; top: 461px; }
```
